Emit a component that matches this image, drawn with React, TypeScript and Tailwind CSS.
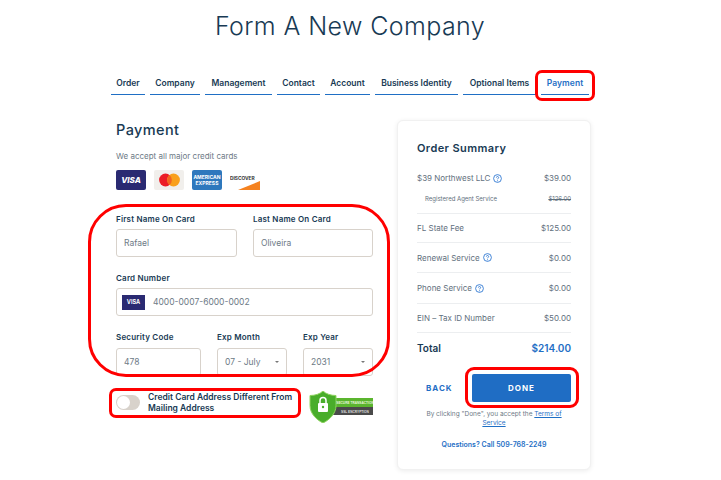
import React from "react";

const tabs = [
  { label: "Order", w: "w-[34px]" },
  { label: "Company", w: "w-[50px]" },
  { label: "Management", w: "w-[67px]" },
  { label: "Contact", w: "w-[43px]" },
  { label: "Account", w: "w-[45px]" },
  { label: "Business Identity", w: "w-[83px]" },
  { label: "Optional Items", w: "w-[73px]" },
];

const Help = () => (
  <svg viewBox="0 0 12 12" className="w-[9px] h-[9px] ml-[3px] shrink-0 text-[#1f6fd0]">
    <circle cx="6" cy="6" r="5.2" fill="none" stroke="currentColor" strokeWidth="1.1" />
    <path d="M4.5 4.8c0-2 3-2 3 0 0 1.2-1.5 1.1-1.5 2.3" fill="none" stroke="currentColor" strokeWidth="1.1" />
    <circle cx="6" cy="8.9" r=".7" fill="currentColor" />
  </svg>
);

const Label = ({ text }: { text: string }) => (
  <div className="text-[8px] leading-[10px] font-semibold text-[#183a54] tracking-[0.2px] whitespace-nowrap">{text}</div>
);

const Box = ({ className, children }: { className: string; children: React.ReactNode }) => (
  <div className={"h-[28px] border border-[#d8d2cb] rounded-[3px] flex items-center text-[8.5px] text-[#6d7a86] " + className}>
    {children}
  </div>
);

const Caret = () => <span className="ml-auto w-0 h-0 border-x-[2.5px] border-x-transparent border-t-[2.5px] border-t-[#777]" />;

const Row = ({ name, price, help, className }: { name: string; price: string; help?: boolean; className: string }) => (
  <div className={"flex items-center justify-between text-[8px] text-[#5f6f7d] border-b border-[#eceef0] " + className}>
    <span className="flex items-center">
      {name}
      {help && <Help />}
    </span>
    <span>{price}</span>
  </div>
);

const CreditCards = () => (
  <div className="flex gap-[8px] mt-[9px]">
    <div className="w-[30px] h-[20px] rounded-[2px] bg-[#2a2a72] flex items-center justify-center text-white text-[8px] font-extrabold italic">VISA</div>
    <div className="w-[30px] h-[20px] rounded-[2px] bg-[#f1efec] flex items-center justify-center">
      <svg viewBox="0 0 22 14" className="w-[23px] h-[14px]">
        <circle cx="7" cy="7" r="6.4" fill="#eb1c26" />
        <circle cx="15" cy="7" r="6.4" fill="#f9a01b" />
        <path d="M11 2a6.4 6.4 0 0 1 0 10 6.4 6.4 0 0 1 0-10z" fill="#f26522" />
      </svg>
    </div>
    <div className="w-[30px] h-[20px] rounded-[2px] bg-[#2e78bd] flex flex-col items-center justify-center text-white text-[5px] leading-[6px] font-bold">
      <span>AMERICAN</span>
      <span>EXPRESS</span>
    </div>
    <div className="relative w-[30px] h-[20px] overflow-hidden">
      <svg viewBox="0 0 30 20" className="absolute inset-0 w-[30px] h-[20px]">
        <path d="M8 20L30 11V20z" fill="#f58220" />
      </svg>
      <div className="relative text-[4.8px] leading-[20px] pb-[3px] font-bold text-[#333] h-[15px] -mt-[2px]">DISCOVER</div>
    </div>
  </div>
);

const Shield = () => (
  <svg viewBox="0 0 64 32" className="w-[64px] h-[32px] ml-[6px] mt-[3px] shrink-0">
    <rect x="24" y="7" width="40" height="9" fill="#5bb52e" />
    <rect x="24" y="16" width="40" height="8" fill="#4a4a4a" />
    <path d="M14 0c3 3 8 4.500 13 4.500v10C27 23 20 29 14 32 8 29 1 23 1 14.500v-10C6 4.500 11 3 14 0z" fill="#49ad2a" stroke="#8fd45f" strokeWidth="1" />
    <rect x="9" y="12" width="10" height="9" rx="1" fill="#fff" />
    <path d="M11 12V9.500a3 3 0 0 1 6 0V12" fill="none" stroke="#fff" strokeWidth="1.500" />
    <circle cx="14" cy="16" r="1.200" fill="#49ad2a" />
    <text x="46" y="13" textAnchor="middle" fontSize="3.200" fontWeight="700" fill="#e8f7dc" fontFamily="Liberation Sans, sans-serif">SECURE TRANSACTION</text>
    <text x="46" y="21.500" textAnchor="middle" fontSize="3.200" fontWeight="700" fill="#ddd" fontFamily="Liberation Sans, sans-serif">SSL ENCRYPTION</text>
  </svg>
);

export default function App() {
  return (
    <div className="relative w-[721px] h-[480px] overflow-hidden bg-white font-['Inter',sans-serif]">
      <h1 className="pt-[10px] pr-[21px] text-center text-[25px] leading-[32px] font-light text-[#183a54] tracking-[0.4px]">Form A New Company</h1>

      <div className="flex gap-[5px] ml-[111px] mt-[31px]">
        {tabs.map((t) => (
          <div key={t.label} className={t.w + " h-[22px] border-b border-[#1f6fc5] flex items-center justify-center text-[8.5px] font-semibold text-[#183a54] whitespace-nowrap"}>
            {t.label}
          </div>
        ))}
        <div className="w-[48px] h-[22px] border-b border-[#1f6fc5] flex items-center justify-center text-[8.5px] tracking-[0.1px] font-semibold text-[#1f6fc5]">Payment</div>
      </div>

      <div className="flex ml-[116px] mt-[25px]">
        <div className="w-[257px]">
          <div className="text-[14.5px] leading-[18px] mt-[1px] font-medium text-[#183a54] tracking-[0.4px]">Payment</div>
          <div className="text-[8px] leading-[10px] mt-[12px] text-[#6d7a86]">We accept all major credit cards</div>
          <CreditCards />

          <div className="flex gap-[16px] mt-[24px]">
            <div className="w-[121px]">
              <Label text="First Name On Card" />
              <Box className="mt-[5px] pl-[7px]">Rafael</Box>
            </div>
            <div className="w-[120px]">
              <Label text="Last Name On Card" />
              <Box className="mt-[5px] pl-[7px]">Oliveira</Box>
            </div>
          </div>

          <div className="mt-[16px]">
            <Label text="Card Number" />
            <Box className="mt-[5px] pl-[5px]">
              <span className="w-[23px] h-[15px] bg-[#2a2a72] text-white text-[5.5px] font-bold flex items-center justify-center mr-[8px]">VISA</span>
              4000-0007-6000-0002
            </Box>
          </div>

          <div className="flex mt-[16px]">
            <div className="w-[85px]">
              <Label text="Security Code" />
              <Box className="mt-[6px] pl-[7px]">478</Box>
            </div>
            <div className="w-[70px] ml-[16px]">
              <Label text="Exp Month" />
              <Box className="mt-[6px] px-[7px]">07 - July<Caret /></Box>
            </div>
            <div className="w-[70px] ml-[16px]">
              <Label text="Exp Year" />
              <Box className="mt-[6px] px-[7px]">2031<Caret /></Box>
            </div>
          </div>

          <div className="flex mt-[12px]">
            <div className="flex items-start mt-[4px]">
              <div className="w-[24px] h-[15px] mt-[3px] rounded-full bg-[#d8d2cb] flex items-center pl-[1px] shrink-0">
                <div className="w-[13px] h-[13px] rounded-full bg-white" />
              </div>
              <div className="w-[155px] ml-[8px] text-[8.5px] leading-[11px] font-semibold text-[#183a54]">
                Credit Card Address Different From Mailing Address
              </div>
            </div>
            <Shield />
          </div>
        </div>

        <div className="w-[194px] h-[350px] ml-[24px] px-[19px] rounded-[6px] bg-white border border-[#f1f1f1] shadow-[0_1px_5px_rgba(0,0,0,0.08)]">
          <div className="text-[11px] leading-[14px] mt-[20px] font-semibold text-[#183a54] tracking-[0.4px]">Order Summary</div>
          <div className="flex items-center justify-between text-[8px] text-[#5f6f7d] mt-[16px] h-[14px]">
            <span className="flex items-center">$39 Northwest LLC<Help /></span>
            <span>$39.00</span>
          </div>
          <div className="flex items-center justify-between h-[29px] pb-[1px] pl-[8px] text-[6px] text-[#5f6f7d] border-b border-[#eceef0]">
            <span>Registered Agent Service</span>
            <span className="line-through">$126.00</span>
          </div>
          <Row name="FL State Fee" price="$125.00" className="h-[29px]" />
          <Row name="Renewal Service" price="$0.00" help className="h-[30px]" />
          <Row name="Phone Service" price="$0.00" help className="h-[31px]" />
          <Row name="EIN – Tax ID Number" price="$50.00" className="h-[29px]" />
          <div className="flex items-center justify-between h-[30px] text-[10px] font-semibold text-[#183a54]">
            <span>Total</span>
            <span className="text-[#1f6fc5]">$214.00</span>
          </div>
          <div className="flex items-center mt-[11px]">
            <span className="w-[55px] pl-[9px] text-[8px] font-bold tracking-[1px] text-[#1f6fc5]">BACK</span>
            <div className="w-[99px] h-[28px] rounded-[2px] bg-[#1f6dc4] flex items-center justify-center text-white text-[8px] font-bold tracking-[1px]">DONE</div>
          </div>
          <div className="mt-[8px] text-center text-[6.5px] leading-[9px] text-[#6d7a86]">
            <div>By clicking "Done", you accept the <span className="text-[#1f6fc5] underline">Terms of</span></div>
            <div className="text-[#1f6fc5] underline">Service</div>
          </div>
          <div className="mt-[12px] text-center text-[7px] leading-[9px] font-semibold text-[#1f6fc5]">Questions? Call 509-768-2249</div>
        </div>
      </div>

      <div className="absolute left-[88px] top-[204px] w-[302px] h-[173px] border-[3px] border-[#f00] rounded-[38px]" />
      <div className="absolute left-[109px] top-[388px] w-[192px] h-[30px] border-[3px] border-[#f00] rounded-[7px]" />
      <div className="absolute left-[535px] top-[70px] w-[60px] h-[31px] border-[3px] border-[#f00] rounded-[7px]" />
      <div className="absolute left-[465px] top-[367px] w-[114px] h-[41px] border-[3px] border-[#f00] rounded-[9px]" />
    </div>
  );
}
